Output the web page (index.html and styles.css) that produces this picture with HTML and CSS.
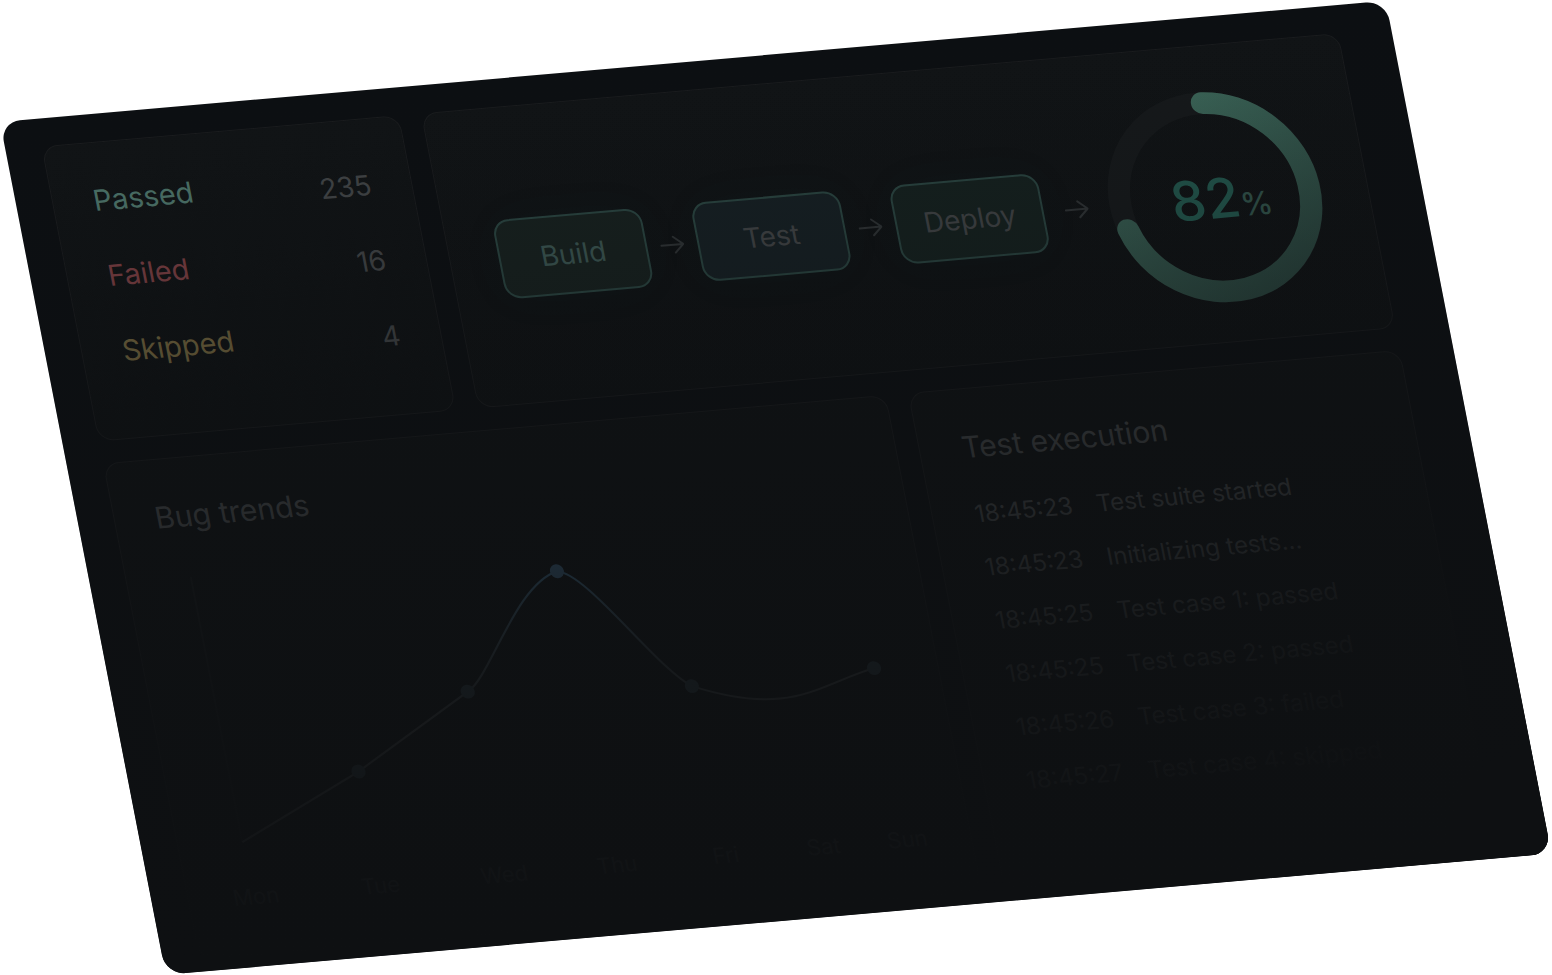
FILE: index.html
```html
<!DOCTYPE html>
<html lang="en">
<head>
    <meta charset="UTF-8">
    <meta name="viewport" content="width=device-width, initial-scale=1.0">
    <title>Test Dashboard</title>
    <link rel="stylesheet" href="styles.css">
</head>
<body>
    <main class="board">
        <!-- Top row: totals and pipeline -->
        <div class="row row-top">
            <section class="card">
                <dl class="totals">
                    <div class="total passed"><dt>Passed</dt><dd>235</dd></div>
                    <div class="total failed"><dt>Failed</dt><dd>16</dd></div>
                    <div class="total skipped"><dt>Skipped</dt><dd>4</dd></div>
                </dl>
            </section>

            <section class="card pipeline">
                <div class="step build">Build</div>
                <svg class="arrow" viewBox="0 0 24 24"><path d="M1 12H23M14 4L23 12L14 20"/></svg>
                <div class="step test">Test</div>
                <svg class="arrow" viewBox="0 0 24 24"><path d="M1 12H23M14 4L23 12L14 20"/></svg>
                <div class="step deploy">Deploy</div>
                <svg class="arrow" viewBox="0 0 24 24"><path d="M1 12H23M14 4L23 12L14 20"/></svg>
                <div class="ring">
                    <svg viewBox="-106 -106 212 212">
                        <defs>
                            <linearGradient id="ringFill" x1="0.2" y1="0" x2="0.8" y2="1">
                                <stop offset="0" stop-color="#3e6a5c"/>
                                <stop offset="1" stop-color="#2a463f"/>
                            </linearGradient>
                        </defs>
                        <circle class="ring-track" r="95"/>
                        <path class="ring-value" d="M5 -95A95 95 0 1 1 -92 25"/>
                    </svg>
                    <p class="ring-label">82<span>%</span></p>
                </div>
            </section>
        </div>

        <!-- Bottom row: bug chart and log -->
        <div class="row row-bottom">
            <section class="card">
                <h2>Bug trends</h2>
                <svg class="chart" viewBox="0 0 703 370">
                    <defs>
                        <radialGradient id="lineFill" gradientUnits="userSpaceOnUse" cx="386" cy="56" r="200">
                            <stop offset="0" stop-color="#345a74"/>
                            <stop offset="0.6" stop-color="#3a444a"/>
                            <stop offset="1" stop-color="#45494b"/>
                        </radialGradient>
                    </defs>
                    <path class="axis" d="M24 30V298"/>
                    <path class="line" d="M24 298L152 238L275 168C300 156 342 66 386 56C415 60 465 160 497 182C590 222 620 192 680 180"/>
                    <g class="dots">
                        <circle cx="152" cy="238" r="7"/>
                        <circle cx="275" cy="168" r="7"/>
                        <circle class="peak" cx="386" cy="56" r="7"/>
                        <circle cx="497" cy="182" r="7"/>
                        <circle cx="680" cy="180" r="7"/>
                    </g>
                    <g class="days">
                        <text x="27" y="361">Mon</text>
                        <text x="152" y="361">Tue</text>
                        <text x="276" y="361">Wed</text>
                        <text x="389" y="361">Thu</text>
                        <text x="498" y="361">Fri</text>
                        <text x="596" y="361">Sat</text>
                        <text x="680" y="361">Sun</text>
                    </g>
                </svg>
            </section>

            <section class="card execution">
                <h2>Test execution</h2>
                <ol class="log">
                    <li><time>18:45:23</time><span>Test suite started</span></li>
                    <li><time>18:45:23</time><span>Initializing tests...</span></li>
                    <li><time>18:45:25</time><span>Test case 1: passed</span></li>
                    <li><time>18:45:25</time><span>Test case 2: passed</span></li>
                    <li><time>18:45:26</time><span>Test case 3: failed</span></li>
                    <li><time>18:45:27</time><span>Test case 4: skipped</span></li>
                </ol>
            </section>
        </div>
    </main>
</body>
</html>
```
FILE: styles.css
```css
* {
    box-sizing: border-box;
}
body {
    margin: 0;
    background: #fff;
    color: #424547;
    font-family: 'Inter', sans-serif;
    font-size: 28px;
    line-height: 36px;
    overflow: hidden;
}
h2, p, dl, dd, ol {
    margin: 0;
    padding: 0;
}

/* Tilted board */
.board {
    position: relative;
    display: flex;
    flex-direction: column;
    gap: 22px;
    width: 89.6%;
    margin: 122px 0 0 0;
    padding: 28px 53px 12px 36px;
    border-radius: 20px;
    background: #0c0f12;
    transform: rotate(-5deg) skewX(6deg);
    transform-origin: 0 0;
    overflow: hidden;
}
/* Fades the content out towards the bottom right */
.board::after {
    content: "";
    position: absolute;
    inset: 0;
    background:
        radial-gradient(circle at 100% 100%, #0e1012 6%, rgba(14, 16, 18, 0) 26%),
        linear-gradient(rgba(14, 16, 18, 0) 0%, rgba(14, 16, 18, 0.5) 47%, rgba(14, 16, 18, 0.82) 70%, rgba(14, 16, 18, 0.94) 90%, #0e1012 100%);
    pointer-events: none;
}
.row {
    display: grid;
    gap: 22px;
}
.row-top {
    grid-template-columns: 359fr 920fr;
}
.row-bottom {
    grid-template-columns: 785fr 493fr;
}
.card {
    min-height: 299px;
    padding: 40px;
    border: 1px solid #1a1c1e;
    border-radius: 16px;
    background: linear-gradient(#111416, #0e1113);
}
.row-bottom .card {
    background: #0f1214;
}
h2 {
    margin-bottom: 14px;
    font-size: 30px;
    font-weight: 400;
}

/* Totals */
.totals {
    display: flex;
    flex-direction: column;
    gap: 32px;
}
.total {
    display: flex;
    justify-content: space-between;
}
.total dt {
    font-size: 29px;
}
.total dd {
    padding-top: 8px;
}
.passed dt {
    color: #4d746a;
}
.failed dt {
    color: #7c3f43;
}
.skipped dt {
    color: #74663f;
}

/* Pipeline */
.pipeline {
    display: flex;
    align-items: center;
    gap: 13px;
    padding: 6px 46px 0 48px;
}
.step {
    width: 149px;
    padding: 20px 0;
    border: 2px solid #2b4642;
    border-radius: 16px;
    background: #17211f;
    box-shadow: 0 0 48px rgba(50, 140, 120, 0.04);
    text-align: center;
}
.build {
    color: #3c5753;
}
.test {
    background: #162024;
}
.deploy {
    background: #15211f;
}
.arrow {
    width: 24px;
    fill: none;
    stroke: #303436;
    stroke-width: 2;
    stroke-linecap: round;
    stroke-linejoin: round;
}
.arrow:last-of-type,
.ring {
    margin-left: auto;
}
.ring {
    position: relative;
    width: 212px;
    height: 212px;
}
.ring svg {
    display: block;
    overflow: visible;
}
.ring-track,
.ring-value {
    fill: none;
    stroke: #16191b;
    stroke-width: 22;
    stroke-linecap: round;
}
.ring-value {
    stroke: url(#ringFill);
}
.ring-label {
    position: absolute;
    inset: 0;
    display: flex;
    align-items: baseline;
    justify-content: center;
    padding-left: 12px;
    color: #23594f;
    font-size: 55px;
    font-weight: 500;
    line-height: 214px;
}
.ring-label span {
    color: #32554c;
    font-size: 32px;
}

/* Bug chart */
.chart {
    display: block;
    width: 100%;
    overflow: visible;
}
.axis {
    stroke: #16191b;
    stroke-width: 2;
}
.line {
    fill: none;
    stroke: url(#lineFill);
    stroke-width: 2;
}
.dots {
    fill: #2f3f47;
}
.peak {
    fill: #36566f;
}
.days {
    fill: #4b4f52;
    font-size: 22px;
    text-anchor: middle;
}

/* Log */
.execution {
    padding-left: 42px;
}
.log {
    display: flex;
    flex-direction: column;
    gap: 18px;
    padding-top: 18px;
    list-style: none;
    font-size: 24px;
}
.log li {
    display: flex;
    gap: 22px;
    white-space: nowrap;
}
.log time {
    width: 100px;
}
```
